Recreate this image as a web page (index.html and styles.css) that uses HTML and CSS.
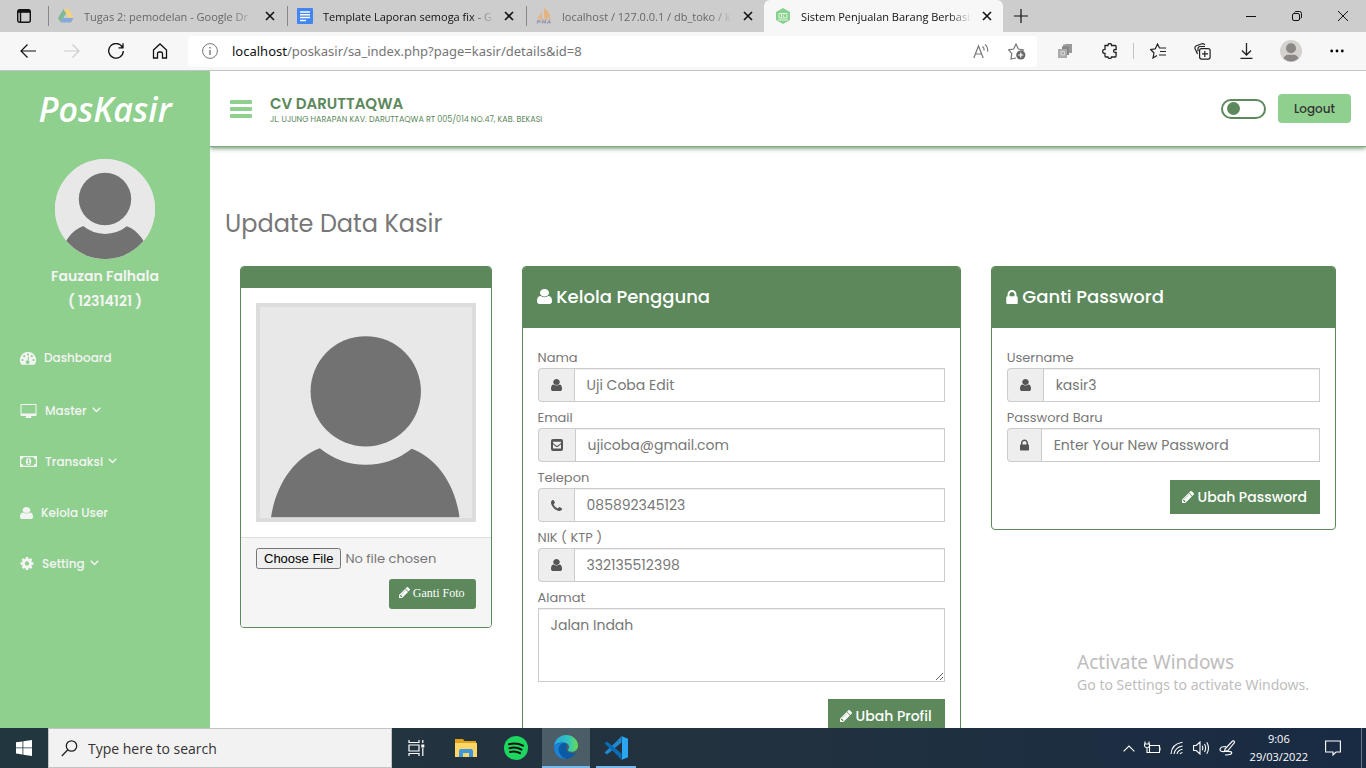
FILE: index.html
```html
<!DOCTYPE html>
<html lang="id">
<head>
<meta charset="utf-8">
<title>Sistem Penjualan Barang Berbasis Web</title>
<link rel="stylesheet" href="styles.css">
</head>
<body>
<svg class="sprite" aria-hidden="true">
  <symbol id="i-user" viewBox="256 128 1280 1536" preserveAspectRatio="none"><path d="M1536 1399q0 109-62.5 187t-150.5 78h-854q-88 0-150.5-78t-62.5-187q0-85 8.5-160.5t31.5-152 58.5-131 94-89 134.5-34.5q131 128 313 128t313-128q76 0 134.5 34.5t94 89 58.5 131 31.5 152 8.5 160.5zm-256-887q0 159-112.5 271.5t-271.5 112.5-271.5-112.5-112.5-271.5 112.5-271.5 271.5-112.5 271.5 112.5 112.5 271.5z"/></symbol>
  <symbol id="i-lock" viewBox="320 128 1152 1408"><path d="M640 768h512v-192q0-106-75-181t-181-75-181 75-75 181v192zm832 96v576q0 40-28 68t-68 28h-960q-40 0-68-28t-28-68v-576q0-40 28-68t68-28h32v-192q0-184 132-316t316-132 316 132 132 316v192h32q40 0 68 28t28 68z"/></symbol>
  <symbol id="i-pencil" viewBox="128 149 1515 1515"><path d="M491 1536l91-91-235-235-91 91v107h128v128h107zm523-928q0-22-22-22-10 0-17 7l-542 542q-7 7-7 17 0 22 22 22 10 0 17-7l542-542q7-7 7-17zm-54-192l416 416-832 832h-416v-416zm683 96q0 53-37 90l-166 166-416-416 166-165q36-38 90-38 53 0 91 38l235 234q37 39 37 91z"/></symbol>
  <symbol id="i-phone" viewBox="192 128 1408 1408"><path d="M1600 1240q0 27-10 70.5t-21 68.5q-21 50-122 106-94 51-186 51-27 0-52.5-3.5t-57.5-12.5-47.5-14.5-55.5-20.5-49-18q-98-35-175-83-128-79-264.5-215.5t-215.5-264.5q-48-77-83-175-3-9-18-49t-20.5-55.5-14.5-47.5-12.5-57.5-3.5-52.5q0-92 51-186 56-101 106-122 25-11 68.5-21t70.5-10q14 0 21 3 18 6 53 76 11 19 30 54t35 63.5 31 53.5q3 4 17.5 25t21.5 35.5 7 28.5q0 20-28.5 50t-62 55-62 53-28.5 46q0 9 5 22.5t8.5 20.5 14 24 11.5 19q76 137 174 235t235 174q2 1 19 11.5t24 14 20.5 8.5 22.5 5q18 0 46-28.5t53-62 55-62 50-28.5q14 0 28.5 7t35.5 21.5 25 17.5q25 15 53.5 31t63.5 35 54 30q70 35 76 53 3 7 3 21z"/></symbol>
  <symbol id="i-cog" viewBox="128 128 1536 1536"><path d="M1152 896q0-106-75-181t-181-75-181 75-75 181 75 181 181 75 181-75 75-181zm512-109v222q0 12-8 23t-20 13l-185 28q-19 54-39 91 35 50 107 138 10 12 10 25t-9 23q-27 37-99 108t-94 71q-12 0-26-9l-138-108q-44 23-91 38-16 136-29 186-7 28-36 28h-222q-14 0-24.5-8.5t-11.5-21.5l-28-184q-49-16-90-37l-141 107q-10 9-25 9-14 0-25-11-126-114-165-168-7-10-7-23 0-12 8-23 15-21 51-66.5t54-70.5q-27-50-41-99l-183-27q-13-2-21-12.5t-8-23.5v-222q0-12 8-23t19-13l186-28q14-46 39-92-40-57-107-138-10-12-10-24 0-10 9-23 26-36 98.5-107.5t94.5-71.5q13 0 26 10l138 107q44-23 91-38 16-136 29-186 7-28 36-28h222q14 0 24.5 8.5t11.5 21.5l28 184q49 16 90 37l142-107q9-9 24-9 13 0 25 10 129 119 165 170 7 8 7 22 0 12-8 23-15 21-51 66.5t-54 70.5q26 50 41 98l183 28q13 2 21 12.5t8 23.5z"/></symbol>
  <symbol id="i-mail" viewBox="0 0 12 12"><path fill-rule="evenodd" d="M2 0h8q2 0 2 2v8q0 2-2 2H2q-2 0-2-2V2q0-2 2-2zM2 2.800v1.200l3.200 2.600q.8.6 1.600 0L10 4V2.800zM2 5.300V9.400h8V5.300L7 7.700q-1 .7-2 0z"/></symbol>
  <symbol id="i-gauge" viewBox="0 0 16 13"><path d="M8 0a8 8 0 0 0-6.800 12.300q.3.500.8.500h12q.5 0 .8-.5A8 8 0 0 0 8 0z"/><g fill="#90d08f"><circle cx="8" cy="2.600" r="1.100"/><circle cx="4.200" cy="4.200" r="1.100"/><circle cx="11.800" cy="4.200" r="1.100"/><circle cx="2.500" cy="8" r="1.100"/><circle cx="13.500" cy="8" r="1.100"/><path d="M8.200 4.800l1 .3-.7 3.300a1.900 1.900 0 1 1-1-.2z"/></g></symbol>
  <symbol id="i-desktop" viewBox="0 0 16 14"><path fill-rule="evenodd" d="M1 0h14q1 0 1 1v10q0 1-1 1h-4.500v1l.7.400v.6H4.800v-.6l.7-.400v-1H1q-1 0-1-1V1q0-1 1-1zM1 1v8.500h14V1z"/></symbol>
  <symbol id="i-money" viewBox="0 0 17 11"><path fill-rule="evenodd" d="M0 0h17v11H0zM3.200 1.200Q3 3 1.200 3.200v4.600Q3 8 3.200 9.800h10.600q.2-1.800 2-2V3.200q-1.800-.2-2-2z"/><ellipse cx="8.500" cy="5.500" rx="2.700" ry="3.600"/><path fill="#90d08f" d="M7.300 4l1-.9h.9v3.800h.8v.9H7.300v-.9h.8V4.400l-.5.300z"/></symbol>
  <symbol id="i-chev" viewBox="0 0 9 6"><path d="M.8.800l3.700 3.700L8.200.800" fill="none" stroke="currentColor" stroke-width="1.500"/></symbol>
  <symbol id="i-x" viewBox="0 0 10 10"><path d="M1 1l8 8M9 1l-8 8" fill="none" stroke="currentColor" stroke-width="1.600"/></symbol>
  <symbol id="avatar" viewBox="0 0 212 211" preserveAspectRatio="xMidYMid slice"><rect width="212" height="211" fill="#e8e8e8"/><circle cx="106" cy="84.500" r="55.300" fill="#727272"/><path fill="#727272" d="M11 211C16 178 34 151 60 141.500Q80 158 106 158T152 142C177 151 196 178 200 211z"/></symbol>
</svg>

<div class="tabstrip">
  <button class="tab-menu" aria-label="Tab actions"><svg width="14" height="14" viewBox="0 0 14 14" fill="none" stroke="#111" stroke-width="1.400"><rect x=".7" y=".7" width="12.600" height="12.600" rx="2"/><path stroke-width="3" d="M1 2.300h12"/><path d="M3.500 2v11"/></svg></button>
  <div class="tab dim"><svg width="16" height="14" viewBox="0 0 16 14"><path fill="#f5d37a" d="M5.500 0h5l5 8.800h-5z"/><path fill="#7fb89a" d="M5.500 0L8 4.500 2.700 13.600 0 9z"/><path fill="#88a8dc" d="M5.200 9H15.500L13 13.600H2.700z"/></svg><span>Tugas 2: pemodelan - Google Dr</span><button aria-label="Close"><svg width="10" height="10"><use href="#i-x"/></svg></button></div>
  <div class="tab"><svg width="16" height="16" viewBox="0 0 16 16"><rect width="16" height="16" rx="1" fill="#4285f4"/><path stroke="#fff" stroke-width="1.500" d="M3 4h10M3 6.800h10M3 9.600h10M3 12.400h6"/></svg><span>Template Laporan semoga fix - G</span><button aria-label="Close"><svg width="10" height="10"><use href="#i-x"/></svg></button></div>
  <div class="tab dim"><svg width="16" height="16" viewBox="0 0 16 16"><path fill="#e3b382" d="M6 2v8H1Q5 7 6 2zM8 0q6 4 6.500 9.500L8 10zM1 10.500h14l-1 1H2z"/><path fill="none" stroke="#9b9bb5" stroke-width="1.200" d="M1 15.500l.7-3h2q1 1-.3 1.700H1.700M6 15.500l.7-3 1.300 2 1.700-2-.5 3M11 15.500l2.500-3 .8 3m-2.200-1h2"/></svg><span>localhost / 127.0.0.1 / db_toko / k</span><button aria-label="Close"><svg width="10" height="10"><use href="#i-x"/></svg></button></div>
  <div class="tab active"><svg width="16" height="16" viewBox="0 0 16 16"><path fill="#86d18b" d="M8 0l7 4v8l-7 4-7-4V4z"/><path fill="none" stroke="#e2f5e2" d="M4 5.500h8v4.500H4zM3 12h10M6.500 6v3.500M9.500 6L8 7.700 9.500 9.500"/></svg><span>Sistem Penjualan Barang Berbasis</span><button aria-label="Close"><svg width="10" height="10"><use href="#i-x"/></svg></button></div>
  <button class="new-tab" aria-label="New tab"><svg width="14" height="14" viewBox="0 0 14 14"><path stroke="#111" stroke-width="1.200" d="M7 0v14M0 7h14"/></svg></button>
  <div class="win-controls">
    <button aria-label="Minimize"><svg width="10" height="10" viewBox="0 0 10 10"><path stroke="#111" d="M0 5.500h10"/></svg></button>
    <button aria-label="Restore"><svg width="10" height="10" viewBox="0 0 10 10" fill="none" stroke="#111"><rect x=".5" y="2.500" width="7" height="7" rx="1.500"/><path d="M2.500 1.500Q3 .5 4 .5h3.500q2 0 2 2V6q0 1-1 1.500"/></svg></button>
    <button aria-label="Close window"><svg width="10" height="10" viewBox="0 0 10 10"><path stroke="#111" d="M0 0l10 10M10 0L0 10"/></svg></button>
  </div>
</div>

<div class="toolbar">
  <button aria-label="Back"><svg width="16" height="14" viewBox="0 0 16 14" fill="none" stroke="#111" stroke-width="1.200"><path d="M16 7H1M7.500.5L1 7l6.500 6.500"/></svg></button>
  <button aria-label="Forward"><svg width="16" height="14" viewBox="0 0 16 14" fill="none" stroke="#ccc" stroke-width="1.200"><path d="M0 7h15M8.500.5L15 7l-6.500 6.500"/></svg></button>
  <button aria-label="Refresh"><svg width="16" height="16" viewBox="0 0 16 16" fill="none" stroke="#111" stroke-width="1.300"><path d="M14.500 4.500A7.300 7.300 0 1 0 15.300 8M15 .3v4.500h-4.500"/></svg></button>
  <button aria-label="Home"><svg width="16" height="16" viewBox="0 0 16 16" fill="none" stroke="#111" stroke-width="1.300"><path d="M1.500 7L8 1l6.500 6v8h-4v-4.500q0-1.500-1.500-1.500H7q-1.500 0-1.500 1.500V15h-4z"/></svg></button>
  <div class="address">
    <svg width="16" height="16" viewBox="0 0 16 16" fill="none" stroke="#777"><circle cx="8" cy="8" r="7.400"/><path stroke-width="1.400" d="M8 7v5M8 4v1.600"/></svg>
    <div class="url" role="textbox" aria-label="Address"><b>localhost</b>/poskasir/sa_index.php?page=kasir/details&amp;id=8</div>
    <button aria-label="Read aloud"><svg width="16" height="15" viewBox="0 0 16 15" fill="none" stroke="#777" stroke-width="1.200"><path d="M.8 14L5.500 2l4.700 12M2.500 10h6M9.500 2.500q2 1.500 1.500 4M12 .5q3.500 2.500 2.500 7"/></svg></button>
    <button aria-label="Add to favorites"><svg width="18" height="17" viewBox="0 0 18 17"><path fill="none" stroke="#777" stroke-width="1.200" d="M8 15l-5 1 .8-5.300L.7 6.800l5-.8L8 1l2.300 5 5 .8-1.500 1.700"/><circle cx="12.800" cy="12" r="4.600" fill="#666"/><path stroke="#fff" stroke-width="1.200" d="M12.800 9.500v5M10.300 12h5"/></svg></button>
  </div>
  <div class="tools">
    <button aria-label="Extension"><svg width="15" height="15" viewBox="0 0 15 15"><path fill="#9a9a9a" d="M8 0h6v9h-3V3H5V1z"/><path fill="#868686" d="M4 2.500h7V11H8V6H4z"/><path fill="#ababab" d="M0 5h9v9H0z"/><path fill="none" stroke="#d8d8d8" d="M3 7.500h3.500v3.500H3z"/></svg></button>
    <button aria-label="Extensions"><svg width="15" height="16" viewBox="0 0 15 16" fill="none" stroke="#222" stroke-width="1.300"><path d="M3 2.500h3q0-2 1.800-2t1.800 2h3.500q1 0 1 1v3h-1q-1.500 0-1.500 1.500t1.500 1.500h1V13q0 1-1 1H9.500q0 1.500-1.700 1.500T6 14H4q-1 0-1-1v-2.500Q.7 10.500.7 8.400T3 6.300z"/></svg></button>
    <span class="divider"></span>
    <button aria-label="Favorites"><svg width="17" height="16" viewBox="0 0 17 16" fill="none" stroke="#222" stroke-width="1.200"><path d="M7 12.500L3 15l1-5L.7 6.500l4.500-.6L7.500 1l2 4h6.500M10 8.500h6M9 12h7"/></svg></button>
    <button aria-label="Collections"><svg width="17" height="17" viewBox="0 0 17 17" fill="none" stroke="#222" stroke-width="1.200"><rect x="5.600" y="5.600" width="10.500" height="10.500" rx="2"/><path d="M10.800 8v6M8 10.900h6M3.500 11L1 5.500q-.5-2 1.300-2.700L8 .8q2-.5 2.700 1.200M4 8.500V6q0-2.500 2-2.500h5"/></svg></button>
    <button aria-label="Downloads"><svg width="13" height="16" viewBox="0 0 13 16" fill="none" stroke="#222" stroke-width="1.300"><path d="M6.500 0v12M2 7.500L6.500 12 11 7.500M.5 15.300h12"/></svg></button>
    <button aria-label="Profile"><svg width="22" height="22" viewBox="0 0 22 22"><circle cx="11" cy="11" r="11" fill="#d4d2cf"/><circle cx="11" cy="8.200" r="5" fill="#8b8784"/><path fill="#8b8784" d="M3.500 18.500Q5 14.800 8 14.800h6q3 0 4.500 3.700-7.500 6-15 0z"/></svg></button>
    <button aria-label="More"><svg width="14" height="4" viewBox="0 0 14 4"><circle cx="1.700" cy="2" r="1.400"/><circle cx="7" cy="2" r="1.400"/><circle cx="12.300" cy="2" r="1.400"/></svg></button>
  </div>
</div>

<div class="page">
  <aside class="sidebar">
    <div class="logo">PosKasir</div>
    <svg class="face" role="img" aria-label="Foto profil"><use href="#avatar"/></svg>
    <div class="who">Fauzan Falhala<br>( 12314121 )</div>
    <nav>
      <a href="#"><svg width="16" height="13"><use href="#i-gauge"/></svg>Dashboard</a>
      <a href="#"><svg width="17" height="14"><use href="#i-desktop"/></svg><span>Master <svg width="9" height="6"><use href="#i-chev"/></svg></span></a>
      <a href="#"><svg width="17" height="11"><use href="#i-money"/></svg><span>Transaksi <svg width="9" height="6"><use href="#i-chev"/></svg></span></a>
      <a href="#"><svg width="13" height="12"><use href="#i-user"/></svg>Kelola User</a>
      <a href="#"><svg width="14" height="13"><use href="#i-cog"/></svg><span>Setting <svg width="9" height="6"><use href="#i-chev"/></svg></span></a>
    </nav>
  </aside>

  <div class="main">
    <header class="topbar">
      <button class="burger" aria-label="Menu"><i></i><i></i><i></i></button>
      <div class="company"><strong>CV DARUTTAQWA</strong><small>JL. UJUNG HARAPAN KAV. DARUTTAQWA RT 005/014 NO.47, KAB. BEKASI</small></div>
      <input class="switch" type="checkbox" role="switch" aria-label="Mode gelap">
      <button class="logout">Logout</button>
    </header>

    <main class="content">
      <h1>Update Data Kasir</h1>
      <div class="columns">
        <section class="card">
          <div class="card-bar"></div>
          <div class="photo"><svg viewBox="0 0 212 211" role="img" aria-label="Foto kasir"><use href="#avatar"/></svg></div>
          <form class="card-foot">
            <input type="file" aria-label="Pilih foto">
            <button type="button" class="btn-photo"><svg width="11" height="11"><use href="#i-pencil"/></svg> Ganti Foto</button>
          </form>
        </section>

        <section class="card">
          <h2><svg width="15" height="15"><use href="#i-user"/></svg> Kelola Pengguna</h2>
          <form class="fields">
            <label for="nama">Nama</label>
            <div class="group"><span><svg width="11" height="12"><use href="#i-user"/></svg></span><input id="nama" value="Uji Coba Edit"></div>
            <label for="email">Email</label>
            <div class="group"><span><svg width="12" height="12"><use href="#i-mail"/></svg></span><input id="email" value="ujicoba@gmail.com"></div>
            <label for="telp">Telepon</label>
            <div class="group"><span><svg width="11" height="11"><use href="#i-phone"/></svg></span><input id="telp" value="085892345123"></div>
            <label for="nik">NIK ( KTP )</label>
            <div class="group"><span><svg width="11" height="12"><use href="#i-user"/></svg></span><input id="nik" value="332135512398"></div>
            <label for="alamat">Alamat</label>
            <textarea id="alamat">Jalan Indah</textarea>
            <button type="button" class="btn"><svg width="12" height="12"><use href="#i-pencil"/></svg> Ubah Profil</button>
          </form>
        </section>

        <section class="card">
          <h2><svg width="12" height="14"><use href="#i-lock"/></svg> Ganti Password</h2>
          <form class="fields">
            <label for="user">Username</label>
            <div class="group"><span><svg width="11" height="12"><use href="#i-user"/></svg></span><input id="user" value="kasir3"></div>
            <label for="pass">Password Baru</label>
            <div class="group"><span><svg width="9" height="12"><use href="#i-lock"/></svg></span><input id="pass" type="password" placeholder="Enter Your New Password"></div>
            <button type="button" class="btn"><svg width="12" height="12"><use href="#i-pencil"/></svg> Ubah Password</button>
          </form>
        </section>
      </div>
    </main>
  </div>
  <div class="watermark"><span>Activate Windows</span><small>Go to Settings to activate Windows.</small></div>
</div>

<footer class="taskbar">
  <button class="start" aria-label="Start"><svg width="16" height="16" viewBox="0 0 16 16" fill="#fff"><path d="M0 2.300l6.500-.9v6.100H0zM7.300 1.300L16 0v7.500H7.300zM0 8.300h6.500v6.200L0 13.600zM7.300 8.300H16V16l-8.700-1.300z"/></svg></button>
  <label class="search"><svg width="17" height="17" viewBox="0 0 17 17" fill="none" stroke="#222" stroke-width="1.300"><circle cx="10.500" cy="6" r="5.200"/><path d="M6.800 9.800L.8 16"/></svg><input type="text" placeholder="Type here to search" aria-label="Type here to search"></label>
  <div class="apps">
    <button aria-label="Task view"><svg width="17" height="16" viewBox="0 0 17 16" fill="none" stroke="#fff" stroke-width="1.200"><path d="M1 0v2.500h10V0M1 16v-2.500h10V16M1 5h10v6H1zM14.800 0v3M14.800 8v8"/><path stroke-width="3" d="M14.800 4.500v3"/></svg></button>
    <button aria-label="File Explorer"><svg width="22" height="18" viewBox="0 0 22 18"><path fill="#e2a21a" d="M0 0h8l1.500 2H21v4H0z"/><path fill="#ffd767" d="M0 4h22v14H0z"/><path fill="#3f96de" d="M4 18v-6q0-2 2-2h10q2 0 2 2v6h-4v-4H8v4z"/></svg></button>
    <button aria-label="Spotify"><svg width="24" height="24" viewBox="0 0 24 24"><circle cx="12" cy="12" r="12" fill="#1ed760"/><path fill="none" stroke="#111" stroke-linecap="round" d="M5 8.200q7.500-2 14 1.500M5.500 12.200q6.500-1.700 12 1.400M6 16q5.500-1.400 10 1.200" stroke-width="2"/></svg></button>
    <button class="current" aria-label="Microsoft Edge"><svg width="24" height="24" viewBox="0 0 24 24"><defs><linearGradient id="eg" x1="0" x2="1"><stop stop-color="#2aa5e0"/><stop offset=".6" stop-color="#31c5be"/><stop offset="1" stop-color="#69dc4d"/></linearGradient></defs><path fill="#0c59a4" d="M.2 10.500C1 6 6 5 9 6.500c4 1.700 4 4.500 3.500 6-1 5 5 7 9.500 5.300-3 5-8 6.200-10 6.200C4 24-.5 17 .2 10.500z"/><path fill="url(#eg)" d="M.1 11.500C.5 4 6.500 0 12 0c7 0 12 5 12 10.500 0 4-3 6.300-6.500 6.300-2.500 0-4-1-3.500-2 2.500-3 .5-7.300-4.500-7.300C4.500 7.500 1 9 .1 11.500z"/><path fill="#1b82d5" d="M9.500 8C5 9 3.500 14 5.500 18c1.500 3.300 4 5.500 7 6C3 24.500-.5 17 .1 11 1.500 8.500 5 7.500 9.500 8z"/></svg></button>
    <button class="running" aria-label="Visual Studio Code"><svg width="24" height="24" viewBox="0 0 24 24"><path fill="#1f8ad2" d="M17.500 0v6.500L3 18.500l-2.500-2L13 5z"/><path fill="#0a6cb5" d="M17.500 24v-6.500L3 5.500l-2.500 2L13 19z"/><path fill="#2da6f1" d="M17.300 0L24 2.700v18.600L17.300 24q.7-.5.700-1.500v-21q0-1-.7-1.500z"/></svg></button>
  </div>
  <div class="tray">
    <svg width="12" height="7" viewBox="0 0 12 7"><path d="M.6 6.400L6 1l5.400 5.400"/></svg>
    <svg width="17" height="14" viewBox="0 0 17 14"><path d="M5.500 4.500h10v7h-10zM16 6.500v3M3 6.500v5h2.500M1 .5v2.500M5 .5v2.500M.5 3h5v2q-1 1.800-2.500 1.800T.5 5z"/></svg>
    <svg width="14" height="14" viewBox="0 0 14 14"><path d="M1 13Q1.500 3 12.500 1.200M4 13q1-6.500 8.500-8M7 13q.8-3.800 5.500-4.700M10 13q.5-1.200 2.500-1.500"/></svg>
    <svg width="17" height="14" viewBox="0 0 17 14"><path d="M.6 4.500h2.600L7 1v12L3.200 9.500H.6zM9.200 4.800q1.300 2.200 0 4.400M11.500 3q2.300 4 0 8M13.800 1.200q3.400 5.800 0 11.600"/></svg>
    <svg width="17" height="16" viewBox="0 0 17 16"><path d="M6 9l7.500-8q2-.7 2 1.500L9 10.500l-3.500.7zM7 6.500q-6 0-6 3 0 2.500 5 2t6.500.5q1.500 3-6.500 3"/></svg>
    <time>9:06<br>29/03/2022</time>
    <svg class="note" width="16" height="16" viewBox="0 0 16 16"><path d="M.6 1h14.800v11H11l-3 3v-3H.6z"/></svg>
    <span class="peek"></span>
  </div>
</footer>
</body>
</html>
```

FILE: styles.css
```css
* { box-sizing: border-box; }
body {
  margin: 0;
  height: 100vh;
  display: flex;
  flex-direction: column;
  overflow: hidden;
  background: #fff;
  font-family: "Poppins", "Inter", sans-serif;
  font-size: 13px;
  color: #777;
}
button, input, textarea { font: inherit; color: inherit; margin: 0; }
button { border: 0; padding: 0; background: none; }
svg { flex: none; }
.sprite { display: none; }

/* Browser frame */
.tabstrip, .taskbar { font-family: "Segoe UI", "Open Sans", sans-serif; }
.toolbar, .watermark { font-family: "Segoe UI", "Noto Sans", sans-serif; }
.tabstrip { flex: none; display: flex; height: 32px; background: #cdcdcd; color: #111; font-size: 11px; }
.tabstrip button { display: grid; place-items: center; }
.tab-menu { width: 47px; }
.tab { flex: 0 1 239px; min-width: 0; display: flex; align-items: center; gap: 10px; padding: 0 11px 0 10px; border-left: 1px solid transparent; }
.tab:not(.active) { background: linear-gradient(#888, #888) left center / 1px 20px no-repeat; }
.tab > span {
  flex: 1; min-width: 0; white-space: nowrap;
  mask-image: linear-gradient(to right, #000 calc(100% - 24px), transparent);
}
.tab.dim > span { color: #666; }
.tab.active { background: #f7f7f7; border-radius: 6px 6px 0 0; }
.new-tab { width: 36px; }
.win-controls { margin-left: auto; display: flex; }
.win-controls button { width: 46px; }

.toolbar { flex: none; display: flex; align-items: center; height: 39px; padding: 0 6px; background: #f7f7f7; border-bottom: 1px solid #c4c4c4; }
.toolbar button { display: grid; place-items: center; width: 44px; height: 30px; }
.address { flex: 1; display: flex; align-items: center; height: 31px; margin-left: 6px; padding: 0 2px 0 14px; background: #fff; border-radius: 4px; }
.address button { width: 36px; }
.url { flex: 1; margin-left: 14px; font-size: 13px; color: #757575; }
.url b { font-weight: 400; color: #111; }
.tools { display: flex; align-items: center; margin-left: 6px; }
.tools button:nth-last-child(-n+2) { width: 46px; }
.divider { width: 1px; height: 16px; margin: 0 2px; background: #c4c4c4; }

/* Application */
.page { flex: 1; min-height: 0; display: flex; position: relative; overflow: hidden; }
.sidebar { flex: 0 0 210px; position: relative; z-index: 1; background: #90d08f; color: #f4f4f4; display: flex; flex-direction: column; align-items: center; }
.logo { margin-top: 16px; font: italic 600 34px/44px "Open Sans", sans-serif; color: #fff; }
.face { width: 100px; height: 100px; margin-top: 28px; border-radius: 50%; background: #e8e8e8; }
.who { margin-top: 5px; font-size: 14px; font-weight: 600; line-height: 25px; text-align: center; }
.sidebar nav { align-self: stretch; margin-top: 17px; }
.sidebar a { display: flex; align-items: center; gap: 8px; height: 51px; padding-left: 20px; font-size: 12px; font-weight: 500; color: inherit; text-decoration: none; }
.sidebar a:first-child { height: 54px; }
.sidebar svg { fill: currentColor; }
.sidebar a span svg { margin-left: 2px; vertical-align: 2px; }

.main { flex: 1; min-width: 0; }
.topbar { display: flex; align-items: center; height: 76px; padding: 0 15px 0 20px; border-bottom: 1px solid #83a785; box-shadow: 0 1px 5px #5c885b; }
.burger { display: grid; gap: 3px; width: 22px; }
.burger i { height: 4px; background: #90d08f; border-radius: 1px; }
.company { margin: 0 auto 0 18px; padding-top: 1px; color: #5c885b; }
.company strong { display: block; font-size: 15px; font-weight: 600; line-height: 21px; }
.company small { display: block; font-size: 8px; line-height: 12px; }
.switch { appearance: none; display: flex; align-items: center; width: 45px; height: 20px; padding-left: 4px; border: 2px solid #5c885b; border-radius: 10px; }
.switch::before { content: ""; width: 13px; height: 13px; border-radius: 50%; background: #5c885b; }
.logout { margin-left: 12px; width: 73px; height: 29px; border-radius: 4px; background: #90d08f; color: #333; font-size: 12px; font-weight: 500; }

.content { padding: 59px 15px 0; }
h1 { margin: 0; font-size: 24px; font-weight: 400; line-height: 36px; }
.columns { display: grid; grid-template-columns: 3fr 5fr 4fr; align-items: start; margin-top: 24px; }
.card { margin: 0 15px; min-width: 0; border: 1px solid #5c885b; border-radius: 4px; overflow: hidden; background: #fff; }
.card-bar { height: 21px; background: #5c885b; }
.card h2 { margin: 0; padding: 15px 14px 16px; background: #5c885b; color: #fff; font-size: 18px; font-weight: 500; line-height: 30px; }
.card h2 svg { fill: #fff; vertical-align: -1px; }
.photo { padding: 15px; }
.photo svg { display: block; width: 100%; border: 4px solid #dcdcdc; background: #e8e8e8; }
.card-foot { display: flex; flex-direction: column; gap: 10px; padding: 10px 15px 18px; background: #f5f5f5; border-top: 1px solid #ddd; }
.card-foot input { width: 100%; }
.card-foot input::file-selector-button { font: 13px "Liberation Sans", sans-serif; }
.btn-photo { align-self: flex-end; height: 30px; padding: 0 11px 0 10px; border-radius: 3px; background: #5c885b; color: #fff; font: 12px "Liberation Serif", serif; }
.btn-photo svg, .btn svg { fill: #fff; vertical-align: -1px; }

.fields { display: flex; flex-direction: column; padding: 20px 15px 15px; }
.fields label { line-height: 20px; }
.group { display: flex; height: 34px; margin-bottom: 6px; }
.group span { display: grid; place-items: center; padding: 0 12px; background: #eee; border: 1px solid #ccc; border-right: 0; border-radius: 4px 0 0 4px; }
.group svg { fill: #555; }
.group input, .fields textarea { flex: 1; min-width: 0; border: 1px solid #ccc; border-radius: 0; padding: 6px 12px; background: #fff; font-size: 14px; line-height: 20px; box-shadow: inset 0 1px 1px #0001; }
.group input::placeholder { color: #777; opacity: 1; }
.fields textarea { flex: none; height: 74px; }
.btn { align-self: flex-end; height: 34px; padding: 0 13px 0 12px; background: #5c885b; color: #fff; font-size: 14px; font-weight: 500; }
.group + .btn { margin-top: 12px; }
textarea + .btn { margin-top: 17px; }

.watermark { position: absolute; right: 57px; bottom: 33px; line-height: 20px; color: #bdbdbd; }
.watermark span { display: block; font-size: 19px; line-height: 26px; }
.watermark small { font-size: 14px; }

/* Taskbar */
.taskbar { flex: none; display: flex; height: 40px; background: linear-gradient(90deg, #22363f, #22323f 50%, #192b43); color: #fff; }
.taskbar button { display: grid; place-items: center; }
.start { width: 48px; }
.search { flex: 0 1 344px; display: flex; align-items: center; gap: 10px; padding: 0 12px; background: #f2f2f2; border: 1px solid #c4c4c4; color: #333; }
.search input { flex: 1; min-width: 0; border: 0; padding: 0; background: none; font-size: 14px; }
.search input::placeholder { color: #333; opacity: 1; }
.apps { display: flex; gap: 2px; }
.apps button { width: 48px; }
.apps .current { background: #4b5d66; border-bottom: 2px solid #76b9ed; }
.apps .running { background: linear-gradient(#76b9ed, #76b9ed) center bottom / 40px 2px no-repeat; }
.tray { margin-left: auto; display: flex; align-items: center; gap: 9px; }
.tray svg { fill: none; stroke: #fff; stroke-width: 1.1; }
.tray time { margin: 0 8px 0 5px; text-align: center; font-size: 11px; line-height: 18px; }
.tray .note { margin-right: 11px; }
.peek { width: 5px; height: 40px; border-left: 1px solid #6b7783; }
```
